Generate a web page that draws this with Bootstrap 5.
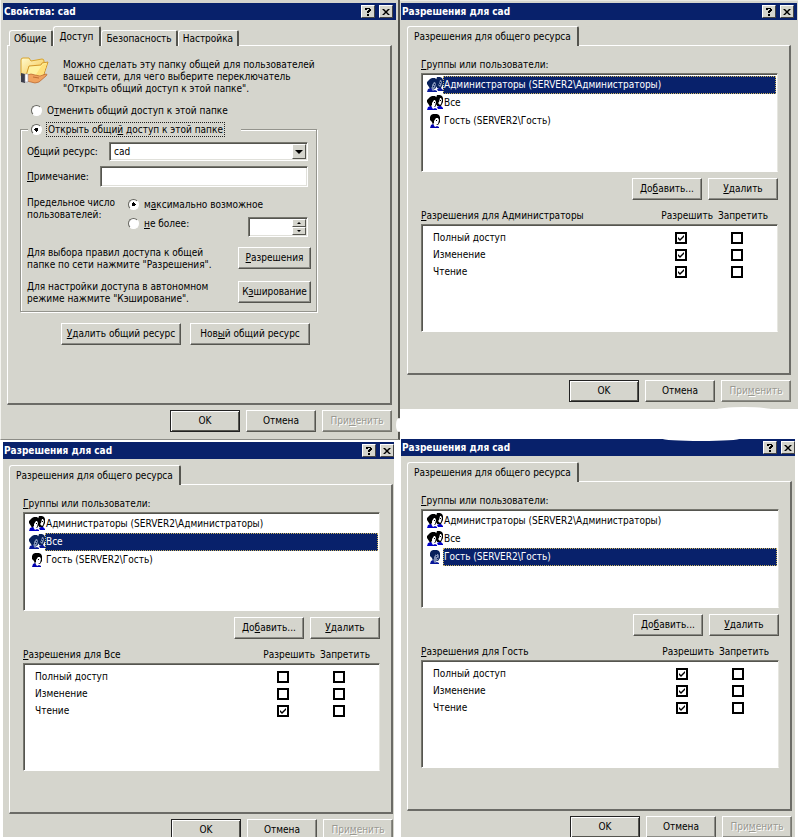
<!DOCTYPE html>
<html lang="ru">
<head>
<meta charset="utf-8">
<meta name="viewport" content="width=device-width, initial-scale=1">
<title>Разрешения для cad</title>
<link href="https://cdn.jsdelivr.net/npm/bootstrap@5.3.0/dist/css/bootstrap.min.css" rel="stylesheet">
<style>
:root{--face:#d5d5cd;--navy:#08216b;--dark:#6b6b66;--shade:#8c8c86}
body{font-family:"DejaVu Sans Condensed",Roboto,Arial,sans-serif;font-size:10px;line-height:12px;color:#000;background:#fff}
.desk{height:100vh;overflow:hidden}
.win{background:var(--face);position:relative}
.framed{padding:3px 2px 7px 2px;border-right:2px solid #55554f;border-left:1px solid #f4f4f0;border-bottom:1px solid var(--shade)}
.win-2{margin-right:2px;padding:2px 1px 7px 1px;border-top:1px solid #e8e8e2}
.win-3{margin:2px 6px 0 3px}
.win-4{margin:30px 5px 0 1px}
.titlebar{background:var(--navy);color:#fff;height:17px;padding:0 3px 0 1px;font:bold 10px/16px "DejaVu Sans Condensed","Noto Sans",sans-serif}
.win-3 .titlebar,.win-4 .titlebar{padding-right:0}
.tb-btn{width:14px;height:13px;background:var(--face);border:1px solid;border-color:#fff #444 #444 #fff;padding:0;display:flex;align-items:center;justify-content:center}
.tabs{padding:6px 0 0;margin-bottom:-1px;position:relative;z-index:1}
.win-1 .tabs{padding-left:2px}
.tabs .tab{background:var(--face);border:1px solid;border-color:#fff #55554f transparent #fff;border-right-width:2px;border-bottom:0;border-radius:3px 2px 0 0;padding:0 4px;height:16px;line-height:15px;color:#000;font-size:10px;text-align:center}
.tabs .tab.active{height:20px;line-height:18px;padding:0 6px}
.page{border:1px solid;border-color:#fff #6b6b66 #6b6b66 #fff;border-right-width:2px;border-bottom-width:2px}
.win-1 .tabs,.win-1 .page{margin-left:4px;margin-right:4px}
.win-2 .tabs,.win-2 .page{margin-left:6px;margin-right:6px}
.win-3 .tabs,.win-3 .page{margin-left:6px;margin-right:1px}
.win-4 .tabs,.win-4 .page{margin-left:6px;margin-right:3px}
.page-perm{padding:12px 11px 41px 13px}
.cap{height:15px;line-height:13px}
.sunken{background:#fff;border:1px solid;border-color:#77776f #e6e6e0 #fff #77776f;box-shadow:inset 1px 1px 0 #55554f}
.users{height:99px;padding:2px 1px 0 5px;border-radius:0}
.users li{display:flex;height:18px;padding:0;border:0;background:none;color:#000}
.users svg{width:16px;height:16px;margin-top:1px;flex:none}
.users span{flex:1;padding:0;line-height:16px;border:1px solid transparent}
.users .picked span{background:var(--navy);color:#fff;border:1px dotted #c9b25c}
.btn95{background:var(--face);border:1px solid;border-color:#fff #55554f #55554f #fff;box-shadow:inset -1px -1px 0 #8c8c86;border-radius:0;padding:0;height:22px;width:70px;font-size:10px;line-height:18px;color:#000;white-space:nowrap}
.btn95.main{border-color:#222;box-shadow:inset 1px 1px 0 #fff,inset -1px -1px 0 #55554f}
.btn95:disabled{color:#999992;text-shadow:1px 1px 0 #fff;background:var(--face);border-color:#fff #77776f #77776f #fff;opacity:1}
.pair{gap:6px;padding-top:6px;padding-bottom:9px}
.cols{gap:5px;padding-right:10px}
.rights{height:108px;padding:4px 12px 0 11px}
.rights table{width:100%;line-height:17px}
.rights th{font-weight:400;padding:0}
.rights td{width:56px;padding:0;vertical-align:middle}
.tick{appearance:none;width:12px;height:12px;border:2px solid #000;background:#fff;margin:0 auto;display:block}
.tick:checked{background:#fff url("data:image/svg+xml,%3Csvg xmlns='http://www.w3.org/2000/svg' viewBox='0 0 8 8'%3E%3Cpath d='M1 3v2l2 2 4-4V1L3 5z'/%3E%3C/svg%3E") center/8px 8px no-repeat}
.foot{gap:6px;padding-top:5px}
.win-1 .foot{padding-right:4px}
.win-2 .foot{padding-right:6px}
.win-3 .foot{padding-right:1px}
.win-4 .foot{padding-right:3px}
.page-share{padding:11px 0 58px 12px}
.intro{gap:14px}
.intro p{padding-top:2px}
.dot{appearance:none;flex:none;width:11px;height:11px;border-radius:50%;border:1px solid;border-color:#66665f #fff #fff #66665f;background:#fff;margin:0}
.dot:checked{background:radial-gradient(circle,#000 0 2px,#fff 2px)}
.opt{display:flex;align-items:center;gap:5px;height:15px}
.opt span{line-height:13px}
.opt-off{margin:8px 0 4px 11px}
.box{width:297px;border:1px solid #94948d;box-shadow:1px 1px 0 #fff,inset 1px 1px 0 #fff;padding:0 5px 6px 6px;margin:0}
.box legend{float:none;width:213px;margin:0 0 0 1px;padding:0 0 0 3px;font-size:10px;line-height:13px;background:var(--face)}
.box legend span{outline:1px dotted #222;padding:0 1px}
.line{display:flex;align-items:center;justify-content:space-between;padding:5px 3px 0 0}
.limit{display:flex;gap:24px;padding:10px 3px 0 0}
.line-btn{display:flex;align-items:flex-start;justify-content:space-between;margin-top:10px}
.field{background:#fff;border:1px solid;border-color:#77776f #fff #fff #77776f;box-shadow:inset 1px 1px 0 #55554f,inset -1px -1px 0 #e0e0da;border-radius:0;font-size:10px;line-height:14px;padding:0 4px;color:#000;min-width:0}
.arrow{background:var(--face);border:1px solid;border-color:#fff #55554f #55554f #fff;padding:0;display:flex;align-items:center;justify-content:center;line-height:0}
.combo{width:199px;height:19px}
.combo select{appearance:none;width:100%;height:19px}
.combo .arrow{position:absolute;right:2px;top:2px;width:14px;height:15px;pointer-events:none}
.spin{width:60px;height:20px;margin-top:5px}
.spin input{width:100%;height:20px}
.spin div{position:absolute;right:2px;top:2px;width:14px}
.spin .arrow{height:8px;width:14px}
.note{height:21px;width:208px}
.action{width:73px}
.share-btns{gap:9px;padding:11px 0 0 41px}
.wide{width:120px}
.blob{position:absolute;background:#fff;border-radius:50%;z-index:2}
.blob-a{width:56px;height:6px;right:26px;bottom:-4px}
.blob-b{width:78px;height:5px;left:261px;top:-3px}
.blob-c{width:6px;height:14px;right:-4px;bottom:7px}
</style>
<script src="https://cdn.jsdelivr.net/npm/bootstrap@5.3.0/dist/js/bootstrap.bundle.min.js"></script>
</head>
<body>
<svg class="d-none" aria-hidden="true">
  <symbol id="help" viewBox="0 0 10 10"><path d="M2 1h5v1h1v2H7v1H6v1H4V4h1V3h1V2H4v1H2zM4 7h2v2H4z"/></symbol>
  <symbol id="close" viewBox="0 0 10 10"><path d="M1 2h2l2 2 2-2h2L6 5l3 3H7L5 6 3 8H1l3-3z"/></symbol>
  <symbol id="person" viewBox="0 0 16 16">
    <path fill="#000" d="M6 1h4l2 1 1 2v5l-2 3H6L5 9 3 7V4l1-2z"/>
    <path fill="#fff" d="M9 5h2l1 2-1 4-2 1 1 2H8l-2-3 1-1V8z"/>
    <path fill="#000" d="M9 7h1v1H9z"/>
    <path fill="#0000b0" d="M3 15l1-3 2-1 2 3 2-1 2 1v1z"/>
  </symbol>
  <symbol id="people" viewBox="0 0 16 16">
    <path fill="#000" d="M10 0h3l2 1 1 2v4l-2 4h-4L9 3zM3 2l2-1h3l2 2v6l-2 3H3L2 10 0 7V5z"/>
    <path fill="#fff" d="M13 3h1l1 2-1 4-1 1-2-2 1-1zM7 5h1l1 2-1 4-1 1 1 2H6l-2-3 1-1V8z"/>
    <path fill="#000" d="M7 7h1v1H7zM13 5h1v1h-1z"/>
    <path fill="#0000c8" d="M0 15l1-3 3-1 2 3 2-1 2 1v1zM10 12l2-1h2l2 2v1h-5z"/>
  </symbol>
  <symbol id="person-on" viewBox="0 0 16 16">
    <path fill="#08215b" d="M6 1h4l2 1 1 2v5l-2 3H6L5 9 3 7V4l1-2z"/>
    <path fill="#7f8fb4" d="M9 5h2l1 2-1 4-2 1 1 2H8l-2-3 1-1V8z"/>
    <path fill="#08215b" d="M9 7h1v1H9zM10 9h1v1h-1zM9 5h1v1H9z"/>
    <path fill="#08189a" d="M3 15l1-3 2-1 2 3 2-1 2 1v1z"/>
  </symbol>
  <symbol id="people-on" viewBox="0 0 16 16">
    <path fill="#08215b" d="M10 0h3l2 1 1 2v4l-2 4h-4L9 3zM3 2l2-1h3l2 2v6l-2 3H3L2 10 0 7V5z"/>
    <path fill="#7f8fb4" d="M13 3h1l1 2-1 4-1 1-2-2 1-1zM7 5h1l1 2-1 4-1 1 1 2H6l-2-3 1-1V8z"/>
    <path fill="#08215b" d="M7 7h1v1H7zM13 5h1v1h-1zM6 9h1v1H6zM12 7h1v1h-1z"/>
    <path fill="#08189a" d="M0 15l1-3 3-1 2 3 2-1 2 1v1zM10 12l2-1h2l2 2v1h-5z"/>
  </symbol>
</svg>

<main class="desk">
<div class="row g-0">
<div class="col-6">

<section class="win win-1 framed me-0">
  <header class="titlebar d-flex align-items-center"><span class="flex-grow-1">Свойства: cad</span>
    <button class="tb-btn" type="button" aria-label="Справка"><svg width="10" height="10"><use href="#help"/></svg></button>
    <button class="tb-btn ms-1" type="button" aria-label="Закрыть"><svg width="10" height="10"><use href="#close"/></svg></button>
  </header>
  <nav class="tabs d-flex align-items-end">
    <button class="tab" type="button">Общие</button><button class="tab active" type="button">Доступ</button><button class="tab" type="button">Безопасность</button><button class="tab" type="button">Настройка</button>
  </nav>
  <div class="page page-share">
    <div class="intro d-flex">
      <svg width="29" height="28" viewBox="0 0 29 28">
        <defs><linearGradient id="fold" x2="1" y2="1"><stop stop-color="#fffbd0"/><stop offset="1" stop-color="#f3bf3e"/></linearGradient></defs>
        <path d="M1 3q0-2 2-2h6l2 3 11-2q2 0 2 2v14L3 20q-2 0-2-2z" fill="url(#fold)" stroke="#d9a32a"/>
        <path d="M9 9l12-1 1-2 6-1-5 15-18 2z" fill="#fff2a0" stroke="#d3982a"/>
        <path d="M22 8l5-2-4 12-8 1z" fill="#ffe17a"/>
        <path d="M7 18q4-2 8 0l5 1 6-2q2 0 0 2l-7 6q-4 2-8 0l-5-1z" fill="#f0a35e" stroke="#b5622a" stroke-width=".7"/>
        <path d="M13 20l6 1" stroke="#b5622a" stroke-width=".8"/>
        <path d="M1 16l4 1v9l-4-1z" fill="#3b3d4a"/><path d="M5 17h3v8H5z" fill="#fff" stroke="#99a" stroke-width=".6"/>
      </svg>
      <p class="mb-0">Можно сделать эту папку общей для пользователей<br>вашей сети, для чего выберите переключатель<br>"Открыть общий доступ к этой папке".</p>
    </div>
    <label class="opt opt-off"><input class="dot" type="radio" name="share"><span>О<u>т</u>менить общий доступ к этой папке</span></label>
    <fieldset class="box">
      <legend><label class="opt"><input class="dot" type="radio" name="share" checked><span>Открыть общи<u>й</u> доступ к этой папке</span></label></legend>
      <div class="line">
        <label for="res">О<u>б</u>щий ресурс:</label>
        <div class="combo position-relative"><select id="res" class="field"><option>cad</option></select><span class="arrow"><svg width="8" height="4"><path d="M0 0h8L4 4z"/></svg></span></div>
      </div>
      <div class="line">
        <label for="rem"><u>П</u>римечание:</label><input id="rem" class="field note" type="text">
      </div>
      <div class="limit">
        <div class="text-nowrap">
          <div class="action">Предельное число<br>пользователей:</div></div>
        <div class="flex-grow-1 ps-1">
          <label class="opt"><input class="dot" type="radio" name="lim" checked><span>м<u>а</u>ксимально возможное</span></label>
          <div class="d-flex justify-content-between">
            <label class="opt mt-1"><input class="dot" type="radio" name="lim"><span><u>н</u>е более:</span></label>
            <div class="spin position-relative"><input class="field" type="text" aria-label="Число пользователей"><div><button class="arrow" type="button" aria-label="Больше"><svg width="4" height="2"><path d="M2 0l2 2H0z"/></svg></button><button class="arrow" type="button" aria-label="Меньше"><svg width="4" height="2"><path d="M0 0h4L2 2z"/></svg></button></div></div>
          </div>
        </div>
      </div>
      <div class="line-btn">
        <div>Для выбора правил доступа к общей<br>папке по сети нажмите "Разрешения".</div>
        <button class="btn btn95 action" type="button"><u>Р</u>азрешения</button>
      </div>
      <div class="line-btn">
        <div>Для настройки доступа в автономном<br>режиме нажмите "Кэширование".</div>
        <button class="btn btn95 action" type="button">К<u>э</u>ширование</button>
      </div>
    </fieldset>
    <div class="d-flex share-btns">
      <button class="btn btn95 wide" type="button"><u>У</u>далить общий ресурс</button>
      <button class="btn btn95 wide" type="button">Нов<u>ы</u>й общий ресурс</button>
    </div>
  </div>
  <footer class="foot d-flex justify-content-end"><button class="btn btn95 main" type="button">OK</button><button class="btn btn95" type="button">Отмена</button><button class="btn btn95" type="button" disabled>При<u>м</u>енить</button></footer>
  <span class="blob blob-c"></span>
</section>

<section class="win win-3">
  <header class="titlebar d-flex align-items-center"><span class="flex-grow-1">Разрешения для cad</span>
    <button class="tb-btn" type="button" aria-label="Справка"><svg width="10" height="10"><use href="#help"/></svg></button>
    <button class="tb-btn ms-1" type="button" aria-label="Закрыть"><svg width="10" height="10"><use href="#close"/></svg></button>
  </header>
  <nav class="tabs d-flex"><button class="tab active" type="button">Разрешения для общего ресурса</button></nav>
  <div class="page page-perm">
    <div class="cap" id="g3"><u>Г</u>руппы или пользователи:</div>
    <ul class="list-group sunken users" role="listbox" aria-labelledby="g3">
      <li class="list-group-item" role="option"><svg><use href="#people"/></svg><span>Администраторы (SERVER2\Администраторы)</span></li>
      <li class="list-group-item picked" role="option" aria-selected="true"><svg><use href="#people-on"/></svg><span>Все</span></li>
      <li class="list-group-item" role="option"><svg><use href="#person"/></svg><span>Гость (SERVER2\Гость)</span></li>
    </ul>
    <div class="pair d-flex justify-content-end"><button class="btn btn95" type="button">До<u>б</u>авить...</button><button class="btn btn95" type="button"><u>У</u>далить</button></div>
    <div class="cap cols d-flex"><span class="flex-grow-1" id="p3"><u>Р</u>азрешения для Все</span><span>Разрешить</span><span>Запретить</span></div>
    <div class="sunken rights">
      <table aria-labelledby="p3"><tbody>
        <tr><th scope="row">Полный доступ</th><td><input class="tick" type="checkbox" aria-label="Полный доступ: разрешить"></td><td><input class="tick" type="checkbox" aria-label="Полный доступ: запретить"></td></tr>
        <tr><th scope="row">Изменение</th><td><input class="tick" type="checkbox" aria-label="Изменение: разрешить"></td><td><input class="tick" type="checkbox" aria-label="Изменение: запретить"></td></tr>
        <tr><th scope="row">Чтение</th><td><input class="tick" type="checkbox" checked aria-label="Чтение: разрешить"></td><td><input class="tick" type="checkbox" aria-label="Чтение: запретить"></td></tr>
      </tbody></table>
    </div>
  </div>
  <footer class="foot d-flex justify-content-end"><button class="btn btn95 main" type="button">OK</button><button class="btn btn95" type="button">Отмена</button><button class="btn btn95" type="button" disabled>При<u>м</u>енить</button></footer>
</section>
</div>

<div class="col-6">
<section class="win win-2">
  <header class="titlebar d-flex align-items-center"><span class="flex-grow-1">Разрешения для cad</span>
    <button class="tb-btn" type="button" aria-label="Справка"><svg width="10" height="10"><use href="#help"/></svg></button>
    <button class="tb-btn ms-1" type="button" aria-label="Закрыть"><svg width="10" height="10"><use href="#close"/></svg></button>
  </header>
  <nav class="tabs d-flex"><button class="tab active" type="button">Разрешения для общего ресурса</button></nav>
  <div class="page page-perm">
    <div class="cap" id="g2"><u>Г</u>руппы или пользователи:</div>
    <ul class="list-group sunken users" role="listbox" aria-labelledby="g2">
      <li class="list-group-item picked" role="option" aria-selected="true"><svg><use href="#people-on"/></svg><span>Администраторы (SERVER2\Администраторы)</span></li>
      <li class="list-group-item" role="option"><svg><use href="#people"/></svg><span>Все</span></li>
      <li class="list-group-item" role="option"><svg><use href="#person"/></svg><span>Гость (SERVER2\Гость)</span></li>
    </ul>
    <div class="pair d-flex justify-content-end"><button class="btn btn95" type="button">До<u>б</u>авить...</button><button class="btn btn95" type="button"><u>У</u>далить</button></div>
    <div class="cap cols d-flex"><span class="flex-grow-1" id="p2"><u>Р</u>азрешения для Администраторы</span><span>Разрешить</span><span>Запретить</span></div>
    <div class="sunken rights">
      <table aria-labelledby="p2"><tbody>
        <tr><th scope="row">Полный доступ</th><td><input class="tick" type="checkbox" checked aria-label="Полный доступ: разрешить"></td><td><input class="tick" type="checkbox" aria-label="Полный доступ: запретить"></td></tr>
        <tr><th scope="row">Изменение</th><td><input class="tick" type="checkbox" checked aria-label="Изменение: разрешить"></td><td><input class="tick" type="checkbox" aria-label="Изменение: запретить"></td></tr>
        <tr><th scope="row">Чтение</th><td><input class="tick" type="checkbox" checked aria-label="Чтение: разрешить"></td><td><input class="tick" type="checkbox" aria-label="Чтение: запретить"></td></tr>
      </tbody></table>
    </div>
  </div>
  <footer class="foot d-flex justify-content-end"><button class="btn btn95 main" type="button">OK</button><button class="btn btn95" type="button">Отмена</button><button class="btn btn95" type="button" disabled>При<u>м</u>енить</button></footer>
  <span class="blob blob-a"></span>
</section>

<section class="win win-4">
  <span class="blob blob-b"></span>
  <header class="titlebar d-flex align-items-center"><span class="flex-grow-1">Разрешения для cad</span>
    <button class="tb-btn" type="button" aria-label="Справка"><svg width="10" height="10"><use href="#help"/></svg></button>
    <button class="tb-btn ms-1" type="button" aria-label="Закрыть"><svg width="10" height="10"><use href="#close"/></svg></button>
  </header>
  <nav class="tabs d-flex"><button class="tab active" type="button">Разрешения для общего ресурса</button></nav>
  <div class="page page-perm">
    <div class="cap" id="g4"><u>Г</u>руппы или пользователи:</div>
    <ul class="list-group sunken users" role="listbox" aria-labelledby="g4">
      <li class="list-group-item" role="option"><svg><use href="#people"/></svg><span>Администраторы (SERVER2\Администраторы)</span></li>
      <li class="list-group-item" role="option"><svg><use href="#people"/></svg><span>Все</span></li>
      <li class="list-group-item picked" role="option" aria-selected="true"><svg><use href="#person-on"/></svg><span>Гость (SERVER2\Гость)</span></li>
    </ul>
    <div class="pair d-flex justify-content-end"><button class="btn btn95" type="button">До<u>б</u>авить...</button><button class="btn btn95" type="button"><u>У</u>далить</button></div>
    <div class="cap cols d-flex"><span class="flex-grow-1" id="p4"><u>Р</u>азрешения для Гость</span><span>Разрешить</span><span>Запретить</span></div>
    <div class="sunken rights">
      <table aria-labelledby="p4"><tbody>
        <tr><th scope="row">Полный доступ</th><td><input class="tick" type="checkbox" checked aria-label="Полный доступ: разрешить"></td><td><input class="tick" type="checkbox" aria-label="Полный доступ: запретить"></td></tr>
        <tr><th scope="row">Изменение</th><td><input class="tick" type="checkbox" checked aria-label="Изменение: разрешить"></td><td><input class="tick" type="checkbox" aria-label="Изменение: запретить"></td></tr>
        <tr><th scope="row">Чтение</th><td><input class="tick" type="checkbox" checked aria-label="Чтение: разрешить"></td><td><input class="tick" type="checkbox" aria-label="Чтение: запретить"></td></tr>
      </tbody></table>
    </div>
  </div>
  <footer class="foot d-flex justify-content-end"><button class="btn btn95 main" type="button">OK</button><button class="btn btn95" type="button">Отмена</button><button class="btn btn95" type="button" disabled>При<u>м</u>енить</button></footer>
</section>
</div>
</div>
</main>
</body>
</html>
